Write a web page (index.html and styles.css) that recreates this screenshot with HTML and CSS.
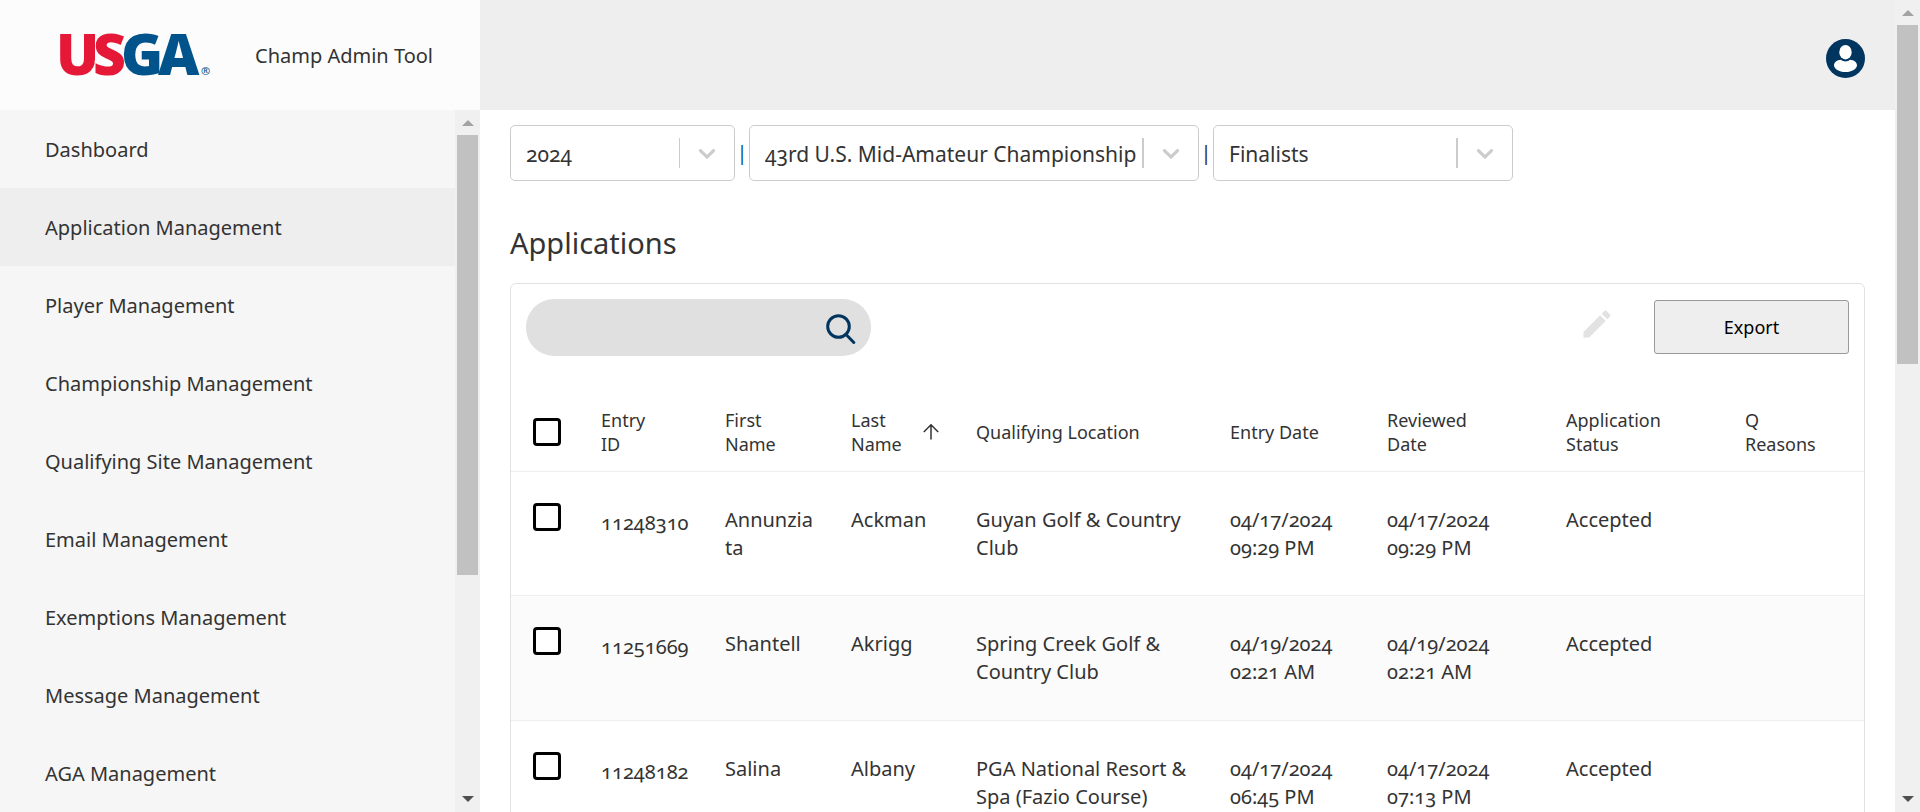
FILE: index.html
```html
<!DOCTYPE html>
<html lang="en">
<head>
<meta charset="utf-8">
<title>Champ Admin Tool</title>
<link rel="stylesheet" href="styles.css">
</head>
<body>
<div class="app">
  <div class="page">
    <header class="topbar">
      <div class="brand">
        <svg class="logo" viewBox="0 0 164 84" role="img" aria-label="USGA">
          <g class="logo-letters">
            <text class="logo-blue" x="69 106" y="62">GA</text>
            <text class="logo-red" x="4 41" y="62">US</text>
          </g>
          <text class="logo-mark" x="149" y="62">®</text>
        </svg>
        <span class="brand-name">Champ Admin Tool</span>
      </div>
      <button class="account" type="button" aria-label="Account">
        <svg viewBox="0 0 39 39"><circle class="account-disc" cx="19.500" cy="19.500" r="19.500"/><ellipse cx="19.500" cy="13.200" rx="6.200" ry="7.200"/><path d="M15 20.800c1.300 1.100 2.800 1.700 4.500 1.700s3.200-.6 4.500-1.700c4 .3 7 2.600 7 5.400 0 3.700-5 6.800-11.500 6.800S8 29.900 8 26.200c0-2.800 3-5.100 7-5.400z"/></svg>
      </button>
    </header>
    <div class="body">
      <nav class="sidebar">
        <a class="nav-item" href="#">Dashboard</a>
        <a class="nav-item nav-item-active" href="#">Application Management</a>
        <a class="nav-item" href="#">Player Management</a>
        <a class="nav-item" href="#">Championship Management</a>
        <a class="nav-item" href="#">Qualifying Site Management</a>
        <a class="nav-item" href="#">Email Management</a>
        <a class="nav-item" href="#">Exemptions Management</a>
        <a class="nav-item" href="#">Message Management</a>
        <a class="nav-item" href="#">AGA Management</a>
      </nav>
      <div class="scrollbar" aria-hidden="true">
        <span class="scroll-up"></span>
        <span class="scroll-track"><span class="scroll-thumb scroll-thumb-nav"></span></span>
        <span class="scroll-down"></span>
      </div>
      <main class="content">
        <div class="filters">
          <div class="picker picker-year">
            <select aria-label="Year"><option>2024</option></select>
            <svg class="chevron" viewBox="0 0 20 20"><path d="M4.516 7.548c.436-.446 1.043-.481 1.576 0L10 11.295l3.908-3.747c.533-.481 1.141-.446 1.574 0 .436.445.408 1.197 0 1.615-.406.418-4.695 4.502-4.695 4.502a1.095 1.095 0 0 1-1.576 0S4.924 9.581 4.516 9.163s-.436-1.170 0-1.615z"/></svg>
          </div>
          <span class="divider divider-blue">|</span>
          <div class="picker picker-championship">
            <select aria-label="Championship"><option>43rd U.S. Mid-Amateur Championship</option></select>
            <svg class="chevron" viewBox="0 0 20 20"><path d="M4.516 7.548c.436-.446 1.043-.481 1.576 0L10 11.295l3.908-3.747c.533-.481 1.141-.446 1.574 0 .436.445.408 1.197 0 1.615-.406.418-4.695 4.502-4.695 4.502a1.095 1.095 0 0 1-1.576 0S4.924 9.581 4.516 9.163s-.436-1.170 0-1.615z"/></svg>
          </div>
          <span class="divider">|</span>
          <div class="picker picker-stage">
            <select aria-label="Stage"><option>Finalists</option></select>
            <svg class="chevron" viewBox="0 0 20 20"><path d="M4.516 7.548c.436-.446 1.043-.481 1.576 0L10 11.295l3.908-3.747c.533-.481 1.141-.446 1.574 0 .436.445.408 1.197 0 1.615-.406.418-4.695 4.502-4.695 4.502a1.095 1.095 0 0 1-1.576 0S4.924 9.581 4.516 9.163s-.436-1.170 0-1.615z"/></svg>
          </div>
        </div>
        <h1 class="title">Applications</h1>
        <section class="card">
          <div class="toolbar">
            <div class="search">
              <input type="text" aria-label="Search applications">
              <button type="button" aria-label="Search"><svg viewBox="0 0 30 30"><circle cx="12.500" cy="12.500" r="10.800"/><path d="M19.800 20.300l8 8.200"/></svg></button>
            </div>
            <button class="edit" type="button" aria-label="Edit" disabled><svg viewBox="0 0 24 24"><path d="M3 17.250V21h3.750L17.810 9.940l-3.750-3.750L3 17.250zM20.710 7.040c.39-.39.39-1.020 0-1.410l-2.340-2.340c-.39-.39-1.020-.39-1.410 0l-1.830 1.830 3.750 3.750 1.830-1.830z"/></svg></button>
            <button class="export" type="button">Export</button>
          </div>
          <table class="entries">
            <colgroup><col class="col-check"><col class="col-id"><col class="col-first"><col class="col-last"><col class="col-location"><col class="col-entry"><col class="col-reviewed"><col class="col-status"><col></colgroup>
            <thead>
              <tr>
                <th><input type="checkbox" aria-label="Select all"></th>
                <th>Entry<br>ID</th>
                <th>First<br>Name</th>
                <th><span class="sorted"><span>Last<br>Name</span><svg viewBox="0 0 16 16" aria-label="Sorted ascending"><path d="M8 15.500V1M.8 8L8 .8 15.200 8"/></svg></span></th>
                <th>Qualifying Location</th>
                <th>Entry Date</th>
                <th>Reviewed<br>Date</th>
                <th>Application<br>Status</th>
                <th>Q<br>Reasons</th>
              </tr>
            </thead>
            <tbody>
              <tr><td class="cell-check"><input type="checkbox" aria-label="Select Annunziata Ackman"></td><td class="cell-id">11248310</td><td class="cell-first">Annunziata</td><td>Ackman</td><td>Guyan Golf &amp; Country Club</td><td>04/17/2024 09:29 PM</td><td>04/17/2024<br>09:29 PM</td><td>Accepted</td><td></td></tr>
              <tr><td class="cell-check"><input type="checkbox" aria-label="Select Shantell Akrigg"></td><td class="cell-id">11251669</td><td class="cell-first">Shantell</td><td>Akrigg</td><td>Spring Creek Golf &amp; Country Club</td><td>04/19/2024 02:21 AM</td><td>04/19/2024<br>02:21 AM</td><td>Accepted</td><td></td></tr>
              <tr><td class="cell-check"><input type="checkbox" aria-label="Select Salina Albany"></td><td class="cell-id">11248182</td><td class="cell-first">Salina</td><td>Albany</td><td>PGA National Resort &amp; Spa (Fazio Course)</td><td>04/17/2024 06:45 PM</td><td>04/17/2024<br>07:13 PM</td><td>Accepted</td><td></td></tr>
            </tbody>
          </table>
        </section>
      </main>
    </div>
  </div>
  <div class="scrollbar" aria-hidden="true">
    <span class="scroll-up"></span>
    <span class="scroll-track"><span class="scroll-thumb scroll-thumb-page"></span></span>
    <span class="scroll-down"></span>
  </div>
</div>
</body>
</html>
```
FILE: styles.css
```css
* {
  box-sizing: border-box;
}

body {
  margin: 0;
  background: #fff;
  color: #333;
  font-family: "Noto Sans", "Open Sans", sans-serif;
  font-size: 20px;
  font-weight: 400;
  line-height: 28px;
  font-variant-numeric: oldstyle-nums;
}

button,
input,
select {
  font: inherit;
  font-variant-numeric: inherit;
  color: inherit;
}

button {
  padding: 0;
  border: 0;
  background: none;
}

.app {
  display: flex;
  height: 100vh;
  overflow: hidden;
}

.page {
  flex: 1;
  min-width: 0;
  display: flex;
  flex-direction: column;
}

/* Header */
.topbar {
  flex: none;
  display: flex;
  align-items: stretch;
  justify-content: space-between;
  height: 110px;
  padding-right: 30px;
  background: #eee;
}

.brand {
  display: flex;
  align-items: center;
  gap: 39px;
  width: 480px;
  padding-left: 52px;
  background: #fcfcfc;
}

.brand-name {
  padding-top: 2px;
}

.logo {
  width: 164px;
  height: 84px;
}

.logo-letters {
  font-family: "Open Sans", sans-serif;
  font-size: 57px;
  font-weight: 800;
}

.logo-red {
  fill: #e51937;
}

.logo-blue,
.logo-mark {
  fill: #00538b;
}

.logo-mark {
  font-size: 11px;
  font-weight: 500;
}

.account {
  align-self: center;
  padding-top: 7px;
}

.account svg {
  display: block;
  width: 39px;
  height: 39px;
  fill: #fff;
}

.account .account-disc {
  fill: #003560;
}

/* Sidebar */
.body {
  flex: 1;
  min-height: 0;
  display: flex;
}

.sidebar {
  flex: none;
  width: 455px;
  overflow: hidden;
  background: #f6f6f6;
}

.nav-item {
  display: flex;
  align-items: center;
  height: 78px;
  padding: 2px 0 0 45px;
  color: inherit;
  text-decoration: none;
}

.nav-item-active {
  background: #eee;
}

/* Scrollbars */
.scrollbar {
  flex: none;
  display: flex;
  flex-direction: column;
  align-items: center;
  justify-content: space-between;
  width: 25px;
  padding: 10px 2px;
  background: #f0f0f0;
}

.scroll-up,
.scroll-down {
  border: 6px solid transparent;
  border-top-width: 0;
  border-bottom: 6px solid #a3a3a3;
}

.scroll-down {
  border-top: 6px solid #505050;
  border-bottom-width: 0;
}

.scroll-track {
  flex: 1;
  width: 21px;
  padding: 9px 0;
}

.scroll-thumb {
  display: block;
  background: #c1c1c1;
}

.scroll-thumb-nav {
  height: 67.500%;
}

.scroll-thumb-page {
  height: 44.500%;
}

/* Content */
.content {
  flex: 1;
  min-width: 0;
  overflow: hidden;
  padding: 15px 30px 0;
}

.filters {
  display: flex;
  align-items: center;
}

.picker {
  display: flex;
  align-items: center;
  height: 56px;
  border: 1px solid #ccc;
  border-radius: 5px;
  font-size: 21px;
}

.picker select {
  flex: 1;
  min-width: 0;
  height: 54px;
  padding: 1px 0 0 15px;
  border: 0;
  background: none;
  appearance: none;
}

.picker-year {
  width: 225px;
}

.picker-championship {
  width: 450px;
}

.picker-stage {
  width: 300px;
}

.chevron {
  flex: none;
  box-sizing: content-box;
  width: 28px;
  height: 30px;
  padding: 0 13px;
  border-left: 2px solid #ccc;
  fill: #ccc;
}

.picker-year .chevron {
  border-left-width: 1px;
}

.divider {
  width: 14px;
  text-align: center;
}

.divider-blue {
  color: #0b5a9c;
}

.title {
  margin: 41px 0 19px;
  font-size: 29px;
  font-weight: 400;
  line-height: 42px;
}

.card {
  border: 1px solid #e2e2e2;
  border-radius: 6px;
}

.toolbar {
  display: flex;
  align-items: flex-start;
  padding: 15px 15px 0;
}

.search {
  display: flex;
  align-items: center;
  width: 345px;
  height: 57px;
  margin-right: auto;
  padding: 2px 15px 0 20px;
  border-radius: 28px;
  background: #e0e0e0;
}

.search input {
  flex: 1;
  min-width: 0;
  border: 0;
  background: none;
  outline: 0;
}

.search svg {
  display: block;
  width: 30px;
  height: 30px;
  fill: none;
  stroke: #003560;
  stroke-width: 3;
  stroke-linecap: round;
}

.edit {
  margin-top: 7px;
}

.edit svg {
  display: block;
  width: 36px;
  height: 36px;
  fill: #e2e2e2;
}

.export {
  width: 195px;
  height: 54px;
  margin: 1px 0 0 39px;
  border: 1px solid #999;
  border-radius: 3px;
  background: #eee;
  color: #000;
  font-size: 18px;
}

/* Table */
.entries {
  width: 100%;
  margin-top: 35px;
  border-collapse: separate;
  border-spacing: 0;
  table-layout: fixed;
}

.col-check {
  width: 75px;
}

.col-id {
  width: 124px;
}

.col-first {
  width: 126px;
}

.col-last {
  width: 125px;
}

.col-location {
  width: 254px;
}

.col-entry {
  width: 157px;
}

.col-reviewed,
.col-status {
  width: 179px;
}

.entries th {
  height: 81px;
  padding: 1px 15px 0;
  border-bottom: 1px solid #eee;
  font-size: 18px;
  font-weight: 400;
  line-height: 24px;
  text-align: left;
}

.entries td {
  height: 124px;
  padding: 34px 15px 0;
  border-bottom: 1px solid #eee;
  vertical-align: top;
  overflow-wrap: anywhere;
}

.entries tbody tr:nth-child(even) {
  background: #fbfbfb;
}

.entries tbody tr:nth-child(even) td {
  height: 125px;
}

.entries .cell-check {
  padding-top: 31px;
}

.entries .cell-id {
  padding-top: 37px;
}

.entries .cell-first {
  padding-right: 20px;
}

.entries input {
  display: block;
  width: 28px;
  height: 28px;
  margin: 0 0 0 7px;
  border: 3px solid #000;
  border-radius: 4px;
  background: #fff;
  appearance: none;
}

.sorted {
  display: flex;
  align-items: center;
  justify-content: space-between;
}

.sorted svg {
  width: 16px;
  height: 16px;
  margin-right: 7px;
  fill: none;
  stroke: #333;
  stroke-width: 1.500;
}
```
